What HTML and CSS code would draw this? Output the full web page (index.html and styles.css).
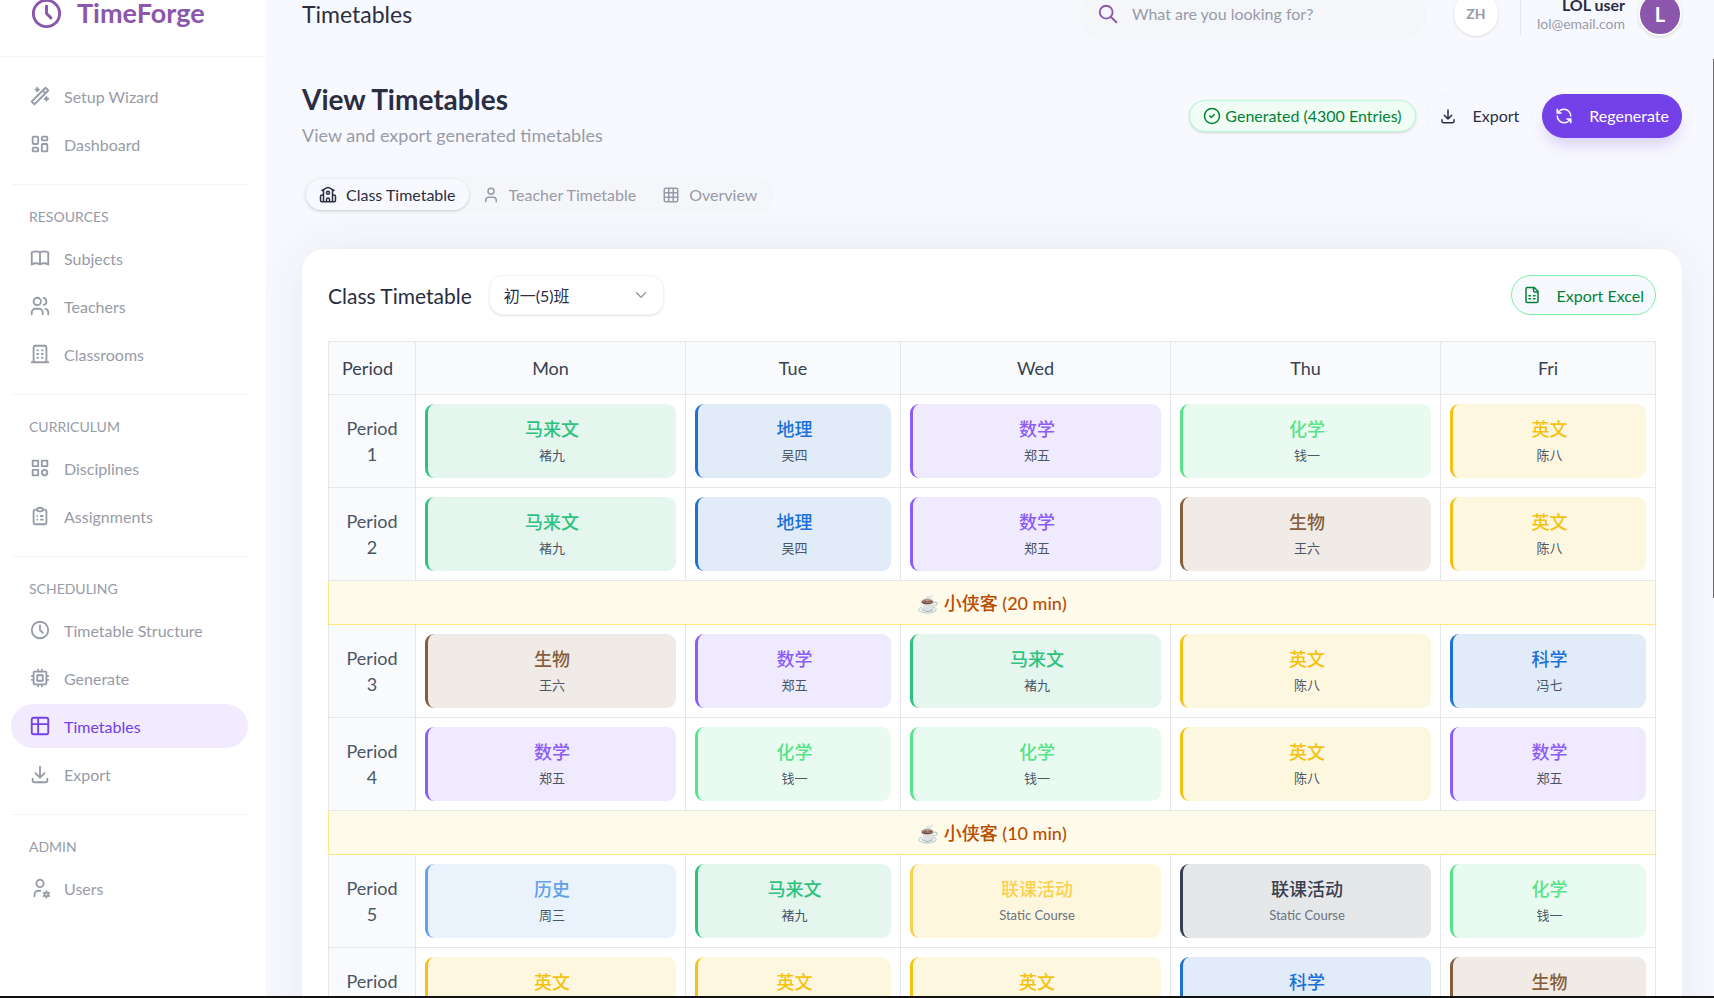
FILE: index.html
```
<!DOCTYPE html>
<html lang="en">

<head>
    <meta charset="UTF-8">
    <meta name="viewport" content="width=device-width, initial-scale=1.0">
    <title>TimeForge - Timetables</title>
    <link rel="stylesheet" href="styles.css">
</head>

<body>
    <svg class="sprite" aria-hidden="true">
        <symbol id="i-clock" viewBox="0 0 24 24"><path d="M3 12a9 9 0 1 0 18 0a9 9 0 1 0 -18 0M12 7v5l3 3"/></symbol>
        <symbol id="i-wand" viewBox="0 0 24 24"><path d="M6 21l15 -15l-3 -3l-15 15l3 3M15 6l3 3M9 3a2 2 0 0 0 2 2a2 2 0 0 0 -2 2a2 2 0 0 0 -2 -2a2 2 0 0 0 2 -2M19 13a2 2 0 0 0 2 2a2 2 0 0 0 -2 2a2 2 0 0 0 -2 -2a2 2 0 0 0 2 -2"/></symbol>
        <symbol id="i-dashboard" viewBox="0 0 24 24"><path d="M5 4h4a1 1 0 0 1 1 1v6a1 1 0 0 1 -1 1h-4a1 1 0 0 1 -1 -1v-6a1 1 0 0 1 1 -1M5 16h4a1 1 0 0 1 1 1v2a1 1 0 0 1 -1 1h-4a1 1 0 0 1 -1 -1v-2a1 1 0 0 1 1 -1M15 12h4a1 1 0 0 1 1 1v6a1 1 0 0 1 -1 1h-4a1 1 0 0 1 -1 -1v-6a1 1 0 0 1 1 -1M15 4h4a1 1 0 0 1 1 1v2a1 1 0 0 1 -1 1h-4a1 1 0 0 1 -1 -1v-2a1 1 0 0 1 1 -1"/></symbol>
        <symbol id="i-book" viewBox="0 0 24 24"><path d="M3 19a9 9 0 0 1 9 0a9 9 0 0 1 9 0M3 6a9 9 0 0 1 9 0a9 9 0 0 1 9 0M3 6v13M12 6v13M21 6v13"/></symbol>
        <symbol id="i-users" viewBox="0 0 24 24"><path d="M5 7a4 4 0 1 0 8 0a4 4 0 1 0 -8 0M3 21v-2a4 4 0 0 1 4 -4h4a4 4 0 0 1 4 4v2M16 3.13a4 4 0 0 1 0 7.75M21 21v-2a4 4 0 0 0 -3 -3.85"/></symbol>
        <symbol id="i-building" viewBox="0 0 24 24"><path d="M3 21h18M9 8h1M9 12h1M9 16h1M14 8h1M14 12h1M14 16h1M5 21v-16a2 2 0 0 1 2 -2h10a2 2 0 0 1 2 2v16"/></symbol>
        <symbol id="i-category" viewBox="0 0 24 24"><path d="M4 4h6v6h-6zM14 4h6v6h-6zM4 14h6v6h-6zM14 17a3 3 0 1 0 6 0a3 3 0 1 0 -6 0"/></symbol>
        <symbol id="i-clipboard" viewBox="0 0 24 24"><path d="M9 5h-2a2 2 0 0 0 -2 2v12a2 2 0 0 0 2 2h10a2 2 0 0 0 2 -2v-12a2 2 0 0 0 -2 -2h-2M9 5a2 2 0 0 1 2 -2h2a2 2 0 0 1 2 2a2 2 0 0 1 -2 2h-2a2 2 0 0 1 -2 -2zM9 12h.01M13 12h2M9 16h.01M13 16h2"/></symbol>
        <symbol id="i-cpu" viewBox="0 0 24 24"><path d="M5 6a1 1 0 0 1 1 -1h12a1 1 0 0 1 1 1v12a1 1 0 0 1 -1 1h-12a1 1 0 0 1 -1 -1zM9 9h6v6h-6zM3 10h2M3 14h2M10 3v2M14 3v2M21 10h-2M21 14h-2M14 21v-2M10 21v-2"/></symbol>
        <symbol id="i-table" viewBox="0 0 24 24"><path d="M3 5a2 2 0 0 1 2 -2h14a2 2 0 0 1 2 2v14a2 2 0 0 1 -2 2h-14a2 2 0 0 1 -2 -2zM3 10h18M10 3v18"/></symbol>
        <symbol id="i-download" viewBox="0 0 24 24"><path d="M4 17v2a2 2 0 0 0 2 2h12a2 2 0 0 0 2 -2v-2M7 11l5 5l5 -5M12 4v12"/></symbol>
        <symbol id="i-user-cog" viewBox="0 0 24 24"><path d="M8 7a4 4 0 1 0 8 0a4 4 0 0 0 -8 0M6 21v-2a4 4 0 0 1 4 -4h2.5M17 19a2 2 0 1 0 4 0a2 2 0 1 0 -4 0M19 15.5v1.5M19 21v1.5M22.03 17.25l-1.3 .75M17.27 20l-1.3 .75M15.97 17.25l1.3 .75M20.73 20l1.3 .75"/></symbol>
        <symbol id="i-search" viewBox="0 0 24 24"><path d="M3 10a7 7 0 1 0 14 0a7 7 0 1 0 -14 0M21 21l-6 -6"/></symbol>
        <symbol id="i-school" viewBox="0 0 24 24"><path d="M14 21v-3a2 2 0 0 0 -4 0v3M18 12h2a2 2 0 0 1 2 2v5a2 2 0 0 1 -2 2h-16a2 2 0 0 1 -2 -2v-5a2 2 0 0 1 2 -2h2M18 21v-15M6 21v-15M4 6l6.1 -3.5a4 4 0 0 1 3.8 0l6.1 3.5M10 9a2 2 0 1 0 4 0a2 2 0 1 0 -4 0"/></symbol>
        <symbol id="i-user" viewBox="0 0 24 24"><path d="M8 7a4 4 0 1 0 8 0a4 4 0 0 0 -8 0M19 21v-2a4 4 0 0 0 -4 -4h-6a4 4 0 0 0 -4 4v2"/></symbol>
        <symbol id="i-grid" viewBox="0 0 24 24"><path d="M5 3h14a2 2 0 0 1 2 2v14a2 2 0 0 1 -2 2h-14a2 2 0 0 1 -2 -2v-14a2 2 0 0 1 2 -2zM3 9h18M3 15h18M9 3v18M15 3v18"/></symbol>
        <symbol id="i-check" viewBox="0 0 24 24"><path d="M2 12a10 10 0 1 0 20 0a10 10 0 1 0 -20 0M9 12l2 2l4 -4"/></symbol>
        <symbol id="i-refresh" viewBox="0 0 24 24"><path d="M21 12a9 9 0 0 0 -9 -9a9.75 9.75 0 0 0 -6.74 2.74l-2.26 2.26M3 3v5h5M3 12a9 9 0 0 0 9 9a9.75 9.75 0 0 0 6.74 -2.74l2.26 -2.26M16 16h5v5"/></symbol>
        <symbol id="i-sheet" viewBox="0 0 24 24"><path d="M15 2h-9a2 2 0 0 0 -2 2v16a2 2 0 0 0 2 2h12a2 2 0 0 0 2 -2v-13zM14 2v4a2 2 0 0 0 2 2h4M8 13h2M14 13h2M8 17h2M14 17h2"/></symbol>
        <symbol id="i-down" viewBox="0 0 24 24"><path d="M6 9l6 6l6 -6"/></symbol>
    </svg>

    <div class="app">
        <aside class="sidebar">
            <div class="logo">
                <svg class="icon"><use href="#i-clock"/></svg>
                <span>TimeForge</span>
            </div>
            <nav>
                <div class="nav-group">
                    <a href="#"><svg class="icon"><use href="#i-wand"/></svg>Setup Wizard</a>
                    <a href="#"><svg class="icon"><use href="#i-dashboard"/></svg>Dashboard</a>
                </div>
                <div class="nav-group">
                    <h2>RESOURCES</h2>
                    <a href="#"><svg class="icon"><use href="#i-book"/></svg>Subjects</a>
                    <a href="#"><svg class="icon"><use href="#i-users"/></svg>Teachers</a>
                    <a href="#"><svg class="icon"><use href="#i-building"/></svg>Classrooms</a>
                </div>
                <div class="nav-group">
                    <h2>CURRICULUM</h2>
                    <a href="#"><svg class="icon"><use href="#i-category"/></svg>Disciplines</a>
                    <a href="#"><svg class="icon"><use href="#i-clipboard"/></svg>Assignments</a>
                </div>
                <div class="nav-group">
                    <h2>SCHEDULING</h2>
                    <a href="#"><svg class="icon"><use href="#i-clock"/></svg>Timetable Structure</a>
                    <a href="#"><svg class="icon"><use href="#i-cpu"/></svg>Generate</a>
                    <a href="#" class="active"><svg class="icon"><use href="#i-table"/></svg>Timetables</a>
                    <a href="#"><svg class="icon"><use href="#i-download"/></svg>Export</a>
                </div>
                <div class="nav-group">
                    <h2>ADMIN</h2>
                    <a href="#"><svg class="icon"><use href="#i-user-cog"/></svg>Users</a>
                </div>
            </nav>
        </aside>

        <main class="main">
            <header class="topbar">
                <span class="crumb">Timetables</span>
                <label class="search">
                    <svg class="icon"><use href="#i-search"/></svg>
                    <input type="search" placeholder="What are you looking for?" aria-label="Search">
                </label>
                <button type="button" class="lang">ZH</button>
                <div class="account">
                    <div class="who">
                        <strong>LOL user</strong>
                        <span>lol@email.com</span>
                    </div>
                    <div class="avatar">L</div>
                </div>
            </header>

            <div class="page-head">
                <div class="titles">
                    <h1>View Timetables</h1>
                    <p>View and export generated timetables</p>
                </div>
                <div class="actions">
                    <span class="badge"><svg class="icon"><use href="#i-check"/></svg>Generated (4300 Entries)</span>
                    <button type="button" class="btn"><svg class="icon"><use href="#i-download"/></svg>Export</button>
                    <button type="button" class="btn btn-primary"><svg class="icon"><use href="#i-refresh"/></svg>Regenerate</button>
                </div>
            </div>

            <div class="tabs" role="tablist">
                <button type="button" role="tab" aria-selected="true" class="tab active"><svg class="icon"><use href="#i-school"/></svg>Class Timetable</button>
                <button type="button" role="tab" aria-selected="false" class="tab"><svg class="icon"><use href="#i-user"/></svg>Teacher Timetable</button>
                <button type="button" role="tab" aria-selected="false" class="tab"><svg class="icon"><use href="#i-grid"/></svg>Overview</button>
            </div>

            <section class="card">
                <div class="card-head">
                    <label for="class-select">Class Timetable</label>
                    <div class="select">
                        <select id="class-select">
                            <option>初一(5)班</option>
                        </select>
                        <svg class="icon"><use href="#i-down"/></svg>
                    </div>
                    <button type="button" class="btn btn-excel"><svg class="icon"><use href="#i-sheet"/></svg>Export Excel</button>
                </div>

                <table>
                    <colgroup>
                        <col class="col-period">
                        <col>
                        <col class="col-narrow">
                        <col>
                        <col>
                        <col class="col-narrow">
                    </colgroup>
                    <thead>
                        <tr>
                            <th class="corner">Period</th>
                            <th>Mon</th>
                            <th>Tue</th>
                            <th>Wed</th>
                            <th>Thu</th>
                            <th>Fri</th>
                        </tr>
                    </thead>
                    <tbody>
                        <tr>
                            <th>Period 1</th>
                            <td><div class="lesson malay"><b>马来文</b><span>褚九</span></div></td>
                            <td><div class="lesson blue"><b>地理</b><span>吴四</span></div></td>
                            <td><div class="lesson math"><b>数学</b><span>郑五</span></div></td>
                            <td><div class="lesson chem"><b>化学</b><span>钱一</span></div></td>
                            <td><div class="lesson english"><b>英文</b><span>陈八</span></div></td>
                        </tr>
                        <tr>
                            <th>Period 2</th>
                            <td><div class="lesson malay"><b>马来文</b><span>褚九</span></div></td>
                            <td><div class="lesson blue"><b>地理</b><span>吴四</span></div></td>
                            <td><div class="lesson math"><b>数学</b><span>郑五</span></div></td>
                            <td><div class="lesson bio"><b>生物</b><span>王六</span></div></td>
                            <td><div class="lesson english"><b>英文</b><span>陈八</span></div></td>
                        </tr>
                        <tr>
                            <td colspan="6" class="break">☕ 小侠客 (20 min)</td>
                        </tr>
                        <tr>
                            <th>Period 3</th>
                            <td><div class="lesson bio"><b>生物</b><span>王六</span></div></td>
                            <td><div class="lesson math"><b>数学</b><span>郑五</span></div></td>
                            <td><div class="lesson malay"><b>马来文</b><span>褚九</span></div></td>
                            <td><div class="lesson english"><b>英文</b><span>陈八</span></div></td>
                            <td><div class="lesson blue"><b>科学</b><span>冯七</span></div></td>
                        </tr>
                        <tr>
                            <th>Period 4</th>
                            <td><div class="lesson math"><b>数学</b><span>郑五</span></div></td>
                            <td><div class="lesson chem"><b>化学</b><span>钱一</span></div></td>
                            <td><div class="lesson chem"><b>化学</b><span>钱一</span></div></td>
                            <td><div class="lesson english"><b>英文</b><span>陈八</span></div></td>
                            <td><div class="lesson math"><b>数学</b><span>郑五</span></div></td>
                        </tr>
                        <tr>
                            <td colspan="6" class="break">☕ 小侠客 (10 min)</td>
                        </tr>
                        <tr>
                            <th>Period 5</th>
                            <td><div class="lesson history"><b>历史</b><span>周三</span></div></td>
                            <td><div class="lesson malay"><b>马来文</b><span>褚九</span></div></td>
                            <td><div class="lesson club"><b>联课活动</b><span class="static">Static Course</span></div></td>
                            <td><div class="lesson club-dark"><b>联课活动</b><span class="static">Static Course</span></div></td>
                            <td><div class="lesson chem"><b>化学</b><span>钱一</span></div></td>
                        </tr>
                        <tr>
                            <th>Period 6</th>
                            <td><div class="lesson english"><b>英文</b><span>陈八</span></div></td>
                            <td><div class="lesson english"><b>英文</b><span>陈八</span></div></td>
                            <td><div class="lesson english"><b>英文</b><span>陈八</span></div></td>
                            <td><div class="lesson blue"><b>科学</b><span>冯七</span></div></td>
                            <td><div class="lesson bio"><b>生物</b><span>王六</span></div></td>
                        </tr>
                    </tbody>
                </table>
            </section>
            <div class="scroll-thumb"></div>
        </main>
    </div>
</body>

</html>
```

FILE: styles.css
```
* {
    margin: 0;
    padding: 0;
    box-sizing: border-box;
}

body {
    font-family: Lato, "Noto Sans CJK SC", sans-serif;
    font-size: 16px;
    color: #2b2d42;
    background: #f8f9fe;
}

button,
input,
select {
    font: inherit;
    color: inherit;
    border: none;
    background: none;
    outline: none;
}

a {
    color: inherit;
    text-decoration: none;
}

.sprite {
    display: none;
}

.icon {
    flex: none;
    width: 18px;
    height: 18px;
    fill: none;
    stroke: currentColor;
    stroke-width: 2;
    stroke-linecap: round;
    stroke-linejoin: round;
}

.app {
    display: flex;
    height: 100vh;
    overflow: hidden;
    border-bottom: 2px solid #111;
}

/* sidebar */
.sidebar {
    flex: none;
    position: relative;
    z-index: 1;
    width: 266px;
    background: #fff;
}

/* header row is scrolled partly out of view */
.logo,
.topbar {
    display: flex;
    align-items: center;
    height: 57px;
    padding-bottom: 30px;
}

.logo {
    gap: 13px;
    padding-left: 29px;
    border-bottom: 1px solid #f3f4f6;
    font-size: 27px;
    font-weight: 700;
    line-height: 26px;
    color: #8b56ab;
}

.logo .icon {
    width: 35px;
    height: 35px;
}

nav {
    padding: 17px 18px 0 11px;
}

.nav-group {
    padding-bottom: 14px;
}

.nav-group + .nav-group {
    padding-top: 21px;
    border-top: 1px solid #f3f4f6;
}

.nav-group h2 {
    margin-bottom: 8px;
    padding-left: 18px;
    font-size: 14px;
    font-weight: 400;
    line-height: 22px;
    color: #979ba6;
}

.nav-group a {
    display: flex;
    align-items: center;
    gap: 13px;
    height: 44px;
    margin-bottom: 4px;
    padding-left: 18px;
    border-radius: 22px;
    color: #979ba6;
}

.nav-group .icon {
    width: 22px;
    height: 22px;
}

.nav-group a.active {
    color: #7440e8;
    background: #f1ebfd;
}

/* content */
.main {
    flex: 1;
    position: relative;
    min-width: 0;
    padding: 0 32px 0 36px;
}

.crumb {
    margin-right: auto;
    font-size: 23px;
    line-height: 26px;
}

.search {
    display: flex;
    align-items: center;
    gap: 13px;
    flex: none;
    width: 348px;
    height: 52px;
    margin-right: 27px;
    padding: 0 18px;
    border-radius: 26px;
    background: #f5f6fa;
}

.search .icon {
    width: 22px;
    height: 22px;
    color: #8b56ab;
}

.search input {
    flex: 1;
    min-width: 0;
}

.search input::placeholder {
    color: #979ba6;
}

.lang {
    flex: none;
    width: 44px;
    height: 44px;
    margin-right: 22px;
    border-radius: 50%;
    background: #fff;
    box-shadow: 0 1px 3px rgba(0, 0, 0, .12);
    font-size: 14px;
    font-weight: 700;
    color: #979ba6;
}

.account {
    display: flex;
    align-items: center;
    flex: none;
    gap: 13px;
    height: 44px;
    padding-left: 16px;
    border-left: 1px solid #e5e7eb;
}

.who {
    display: flex;
    flex-direction: column;
    text-align: right;
    line-height: 19px;
}

.who span {
    font-size: 14px;
    color: #979ba6;
}

.avatar {
    width: 44px;
    height: 44px;
    border: 2px solid #fff;
    border-radius: 50%;
    background: #8b56ab;
    box-shadow: 0 1px 3px rgba(0, 0, 0, .15);
    font-size: 20px;
    font-weight: 700;
    line-height: 40px;
    text-align: center;
    color: #fff;
}

.page-head {
    display: flex;
    align-items: center;
    justify-content: space-between;
    padding-top: 25px;
}

.titles h1 {
    font-size: 28px;
    line-height: 35px;
}

.titles p {
    margin-top: 4px;
    font-size: 18px;
    line-height: 28px;
    color: #979ba6;
}

.actions {
    display: flex;
    align-items: center;
    gap: 10px;
}

.badge {
    display: flex;
    align-items: center;
    gap: 4px;
    height: 32px;
    padding: 0 13px;
    border: 1px solid #b9f8cf;
    border-radius: 16px;
    background: #f0fdf4;
    box-shadow: 0 1px 3px rgba(0, 0, 0, .15);
    color: #008236;
}

.btn {
    display: flex;
    align-items: center;
    gap: 16px;
    height: 44px;
    padding: 0 12px;
    border: 1px solid #f5f6fa;
    border-radius: 22px;
    background: #f8f9fe;
    cursor: pointer;
}

.btn-primary {
    border-color: #7440e8;
    background: #7440e8;
    box-shadow: 0 10px 16px -3px rgba(116, 64, 232, .22);
    color: #fff;
}

.tabs {
    display: inline-flex;
    margin-top: 26px;
    padding: 4px;
    border-radius: 20px;
    background: #f5f6fa;
}

.tab {
    display: flex;
    align-items: center;
    gap: 9px;
    height: 31px;
    padding: 0 13px;
    border-radius: 16px;
    color: #979ba6;
    cursor: pointer;
}

.tab.active {
    background: #f8f9fe;
    box-shadow: 0 1px 3px rgba(0, 0, 0, .18);
    color: #2b2d42;
}

.card {
    margin-top: 35px;
    padding: 26px;
    border-radius: 22px;
    background: #fff;
    box-shadow: 0 0 50px rgba(43, 45, 66, .08);
}

.card-head {
    display: flex;
    align-items: center;
    gap: 17px;
    margin-bottom: 26px;
}

.card-head label {
    font-size: 21px;
}

.select {
    position: relative;
    width: 175px;
}

.select select {
    width: 100%;
    height: 40px;
    padding: 0 14px;
    border: 1px solid #f3f4f6;
    border-radius: 14px;
    background: #fff;
    box-shadow: 0 1px 2px rgba(0, 0, 0, .1);
    appearance: none;
}

.select .icon {
    position: absolute;
    top: 11px;
    right: 14px;
    color: #979ba6;
    pointer-events: none;
}

.btn-excel {
    height: 40px;
    margin-left: auto;
    padding: 0 11px;
    border-color: #7bf1a8;
    color: #008236;
}

/* timetable */
table {
    width: 100%;
    table-layout: fixed;
    border-collapse: collapse;
    font-size: 18px;
    line-height: 26px;
}

.col-period {
    width: 87px;
}

.col-narrow {
    width: 16.2%;
}

th,
td {
    padding: 9px;
    border: 1px solid #e5e7eb;
    font-weight: 400;
    text-align: center;
}

th {
    padding: 13px;
    background: #f9fafb;
    color: #364153;
}

.corner {
    text-align: left;
}

tbody th {
    padding: 9px 16px;
    color: #4a5565;
}

.break {
    padding: 8px;
    height: 44px;
    border-color: #fee685;
    background: #fffbeb;
    font-weight: 500;
    color: #bb4d00;
}

.lesson {
    display: flex;
    flex-direction: column;
    gap: 2px;
    padding: 12px 9px;
    border-left: 3px solid;
    border-radius: 9px;
}

.lesson b {
    font-weight: 500;
}

.lesson span {
    font-size: 13px;
    line-height: 22px;
    color: #4a5565;
}

.lesson .static {
    color: #6a7282;
}

.malay {
    color: #2dc27e;
    background: #e5f6ee;
}

.blue {
    color: #1c71d8;
    background: #e2ecf9;
}

.math {
    color: #8b5cf6;
    background: #f0eafe;
}

.chem {
    color: #57e389;
    background: #e9fbf0;
}

.english {
    color: #f5c211;
    background: #fef7e0;
}

.bio {
    color: #865e3c;
    background: #f0ebe7;
}

.history {
    color: #62a0ea;
    background: #eaf3fc;
}

.club {
    color: #fbd04e;
    background: #fef7dd;
}

.club-dark {
    color: #374151;
    background: #e5e7e9;
}

.scroll-thumb {
    position: absolute;
    top: 59px;
    right: 0;
    width: 1px;
    height: 539px;
    background: #6b6b70;
}
```
